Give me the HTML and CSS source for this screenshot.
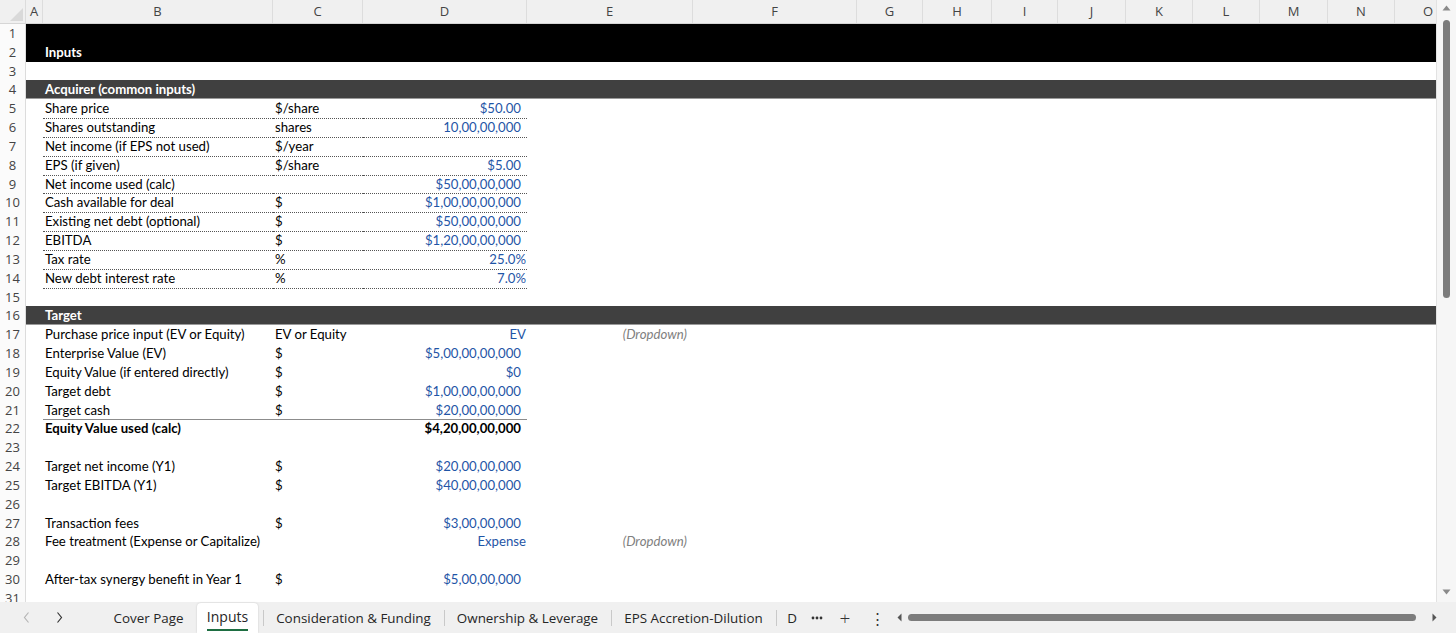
FILE: index.html
```html
<!DOCTYPE html>
<html lang="en">
<head>
<meta charset="utf-8">
<title>Inputs</title>
<link rel="stylesheet" href="styles.css">
</head>
<body>
<div class="app">
  <div class="sheet">
    <div class="grid">
      <div class="colhead">
        <div class="corner"><svg width="26" height="24" viewBox="0 0 26 24"><path d="M23 8 L23 21 L10 21 Z" fill="#d9d9d9"/></svg></div>
        <div class="letters">
          <div>A</div><div>B</div><div>C</div><div>D</div><div>E</div><div>F</div><div>G</div><div>H</div><div>I</div><div>J</div><div>K</div><div>L</div><div>M</div><div>N</div><div>O</div>
        </div>
      </div>

      <div class="row"><div class="rh">1</div><div class="cells black"></div></div>
      <div class="row"><div class="rh">2</div><div class="cells black"><div></div><div class="t bold">Inputs</div></div></div>
      <div class="row"><div class="rh">3</div><div class="cells"></div></div>
      <div class="row"><div class="rh">4</div><div class="cells dark"><div></div><div class="t bold">Acquirer (common inputs)</div></div></div>

      <div class="row"><div class="rh">5</div><div class="cells"><div></div><div class="t dot">Share price</div><div class="t dot">$/share</div><div class="t dot num blue">$50.00</div></div></div>
      <div class="row"><div class="rh">6</div><div class="cells"><div></div><div class="t dot">Shares outstanding</div><div class="t dot">shares</div><div class="t dot num blue">10,00,00,000</div></div></div>
      <div class="row"><div class="rh">7</div><div class="cells"><div></div><div class="t dot">Net income (if EPS not used)</div><div class="t dot">$/year</div><div class="t dot num blue"></div></div></div>
      <div class="row"><div class="rh">8</div><div class="cells"><div></div><div class="t dot">EPS (if given)</div><div class="t dot">$/share</div><div class="t dot num blue">$5.00</div></div></div>
      <div class="row"><div class="rh">9</div><div class="cells"><div></div><div class="t dot">Net income used (calc)</div><div class="t dot"></div><div class="t dot num blue">$50,00,00,000</div></div></div>
      <div class="row"><div class="rh">10</div><div class="cells"><div></div><div class="t dot">Cash available for deal</div><div class="t dot">$</div><div class="t dot num blue">$1,00,00,00,000</div></div></div>
      <div class="row"><div class="rh">11</div><div class="cells"><div></div><div class="t dot">Existing net debt (optional)</div><div class="t dot">$</div><div class="t dot num blue">$50,00,00,000</div></div></div>
      <div class="row"><div class="rh">12</div><div class="cells"><div></div><div class="t dot">EBITDA</div><div class="t dot">$</div><div class="t dot num blue">$1,20,00,00,000</div></div></div>
      <div class="row"><div class="rh">13</div><div class="cells"><div></div><div class="t dot">Tax rate</div><div class="t dot">%</div><div class="t dot pct blue">25.0%</div></div></div>
      <div class="row"><div class="rh">14</div><div class="cells"><div></div><div class="t dot">New debt interest rate</div><div class="t dot">%</div><div class="t dot pct blue">7.0%</div></div></div>
      <div class="row"><div class="rh">15</div><div class="cells"></div></div>

      <div class="row"><div class="rh">16</div><div class="cells dark"><div></div><div class="t bold">Target</div></div></div>
      <div class="row"><div class="rh">17</div><div class="cells"><div></div><div class="t">Purchase price input (EV or Equity)</div><div class="t">EV or Equity</div><div class="t pct blue">EV</div><div class="t note">(Dropdown)</div></div></div>
      <div class="row"><div class="rh">18</div><div class="cells"><div></div><div class="t">Enterprise Value (EV)</div><div class="t">$</div><div class="t num blue">$5,00,00,00,000</div></div></div>
      <div class="row"><div class="rh">19</div><div class="cells"><div></div><div class="t">Equity Value (if entered directly)</div><div class="t">$</div><div class="t num blue">$0</div></div></div>
      <div class="row"><div class="rh">20</div><div class="cells"><div></div><div class="t">Target debt</div><div class="t">$</div><div class="t num blue">$1,00,00,00,000</div></div></div>
      <div class="row"><div class="rh">21</div><div class="cells"><div></div><div class="t rule">Target cash</div><div class="t rule">$</div><div class="t rule num blue">$20,00,00,000</div></div></div>
      <div class="row"><div class="rh">22</div><div class="cells"><div></div><div class="t bold">Equity Value used (calc)</div><div class="t"></div><div class="t num bold">$4,20,00,00,000</div></div></div>
      <div class="row"><div class="rh">23</div><div class="cells"></div></div>
      <div class="row"><div class="rh">24</div><div class="cells"><div></div><div class="t">Target net income (Y1)</div><div class="t">$</div><div class="t num blue">$20,00,00,000</div></div></div>
      <div class="row"><div class="rh">25</div><div class="cells"><div></div><div class="t">Target EBITDA (Y1)</div><div class="t">$</div><div class="t num blue">$40,00,00,000</div></div></div>
      <div class="row"><div class="rh">26</div><div class="cells"></div></div>
      <div class="row"><div class="rh">27</div><div class="cells"><div></div><div class="t">Transaction fees</div><div class="t">$</div><div class="t num blue">$3,00,00,000</div></div></div>
      <div class="row"><div class="rh">28</div><div class="cells"><div></div><div class="t">Fee treatment (Expense or Capitalize)</div><div class="t"></div><div class="t pct blue">Expense</div><div class="t note">(Dropdown)</div></div></div>
      <div class="row"><div class="rh">29</div><div class="cells"></div></div>
      <div class="row"><div class="rh">30</div><div class="cells"><div></div><div class="t">After-tax synergy benefit in Year 1</div><div class="t">$</div><div class="t num blue">$5,00,00,000</div></div></div>
      <div class="row"><div class="rh">31</div><div class="cells"></div></div>
    </div>

    <div class="vscroll">
      <svg class="arr" width="19" height="12" viewBox="0 0 19 12"><path d="M5.5 8.5 L9.5 3.5 L13.5 8.5 Z" fill="#8a8a8a"/></svg>
      <div class="vtrack"><div class="vthumb"></div></div>
      <svg class="arr" width="19" height="12" viewBox="0 0 19 12"><path d="M5.5 3.5 L9.5 8.5 L13.5 3.5 Z" fill="#8a8a8a"/></svg>
    </div>
  </div>

  <div class="tabbar">
    <div class="nav">
      <svg width="34" height="31" viewBox="0 0 34 31"><path d="M24.5 10.5 L20.5 15.5 L24.5 20.5" fill="none" stroke="#b5b5b5" stroke-width="1.2"/></svg>
      <svg width="34" height="31" viewBox="0 0 34 31"><path d="M19.5 10.5 L23.5 15.5 L19.5 20.5" fill="none" stroke="#333" stroke-width="1.2"/></svg>
    </div>
    <div class="tab w-cover">Cover Page</div>
    <div class="tab active w-inputs"><span>Inputs</span></div>
    <div class="tab sep w-cons">Consideration &amp; Funding</div>
    <div class="tab sep w-own">Ownership &amp; Leverage</div>
    <div class="tab sep w-eps">EPS Accretion-Dilution</div>
    <div class="tab sep w-d">D</div>
    <div class="more"><svg width="12" height="4" viewBox="0 0 12 4"><circle cx="2" cy="2" r="1.4" fill="#333"/><circle cx="6" cy="2" r="1.4" fill="#333"/><circle cx="10" cy="2" r="1.4" fill="#333"/></svg></div>
    <div class="plus">+</div>
    <div class="kebab">⋮</div>
    <div class="hscroll">
      <svg width="12" height="31" viewBox="0 0 12 31"><path d="M7.5 11.5 L3.5 15.5 L7.5 19.5 Z" fill="#555"/></svg>
      <div class="hthumb"></div>
      <svg width="12" height="31" viewBox="0 0 12 31"><path d="M4.5 11.5 L8.5 15.5 L4.5 19.5 Z" fill="#555"/></svg>
    </div>
  </div>
</div>
</body>
</html>
```
FILE: styles.css
```css
* { box-sizing: border-box; }

html, body {
  margin: 0;
  padding: 0;
  background: #ffffff;
}

.app {
  width: 1456px;
  height: 633px;
  display: flex;
  flex-direction: column;
  overflow: hidden;
  font-family: "Lato", "Liberation Sans", sans-serif;
}

.sheet {
  height: 602px;
  display: flex;
  overflow: hidden;
}

.grid {
  width: 1437px;
  overflow: hidden;
  border-right: 1px solid #e2e2e2;
}

/* column letters */
.colhead {
  height: 24px;
  display: flex;
  background: #f0f0f0;
  border-bottom: 1px solid #d6d6d6;
}

.corner {
  width: 26px;
  flex: none;
  border-right: 1px solid #dcdcdc;
}

.corner svg { display: block; }

.letters {
  display: grid;
  grid-template-columns: 17px 230px 90px 164px 166px 164px 66px 69px 66px 68px 67px 67px 68px 67px 67px;
  overflow: hidden;
  flex: 1;
}

.letters div {
  text-align: center;
  font-family: "Open Sans", "Noto Sans", sans-serif;
  font-size: 13px;
  line-height: 23px;
  color: #444;
  border-right: 1px solid #dddddd;
}

/* sheet rows */
.row {
  height: 18.83px;
  display: flex;
}

.rh {
  width: 26px;
  flex: none;
  text-align: center;
  font-family: "Open Sans", "Noto Sans", sans-serif;
  font-size: 13px;
  line-height: 18.83px;
  color: #444;
  border-right: 1px solid #dcdcdc;
  background: #fbfbfb;
}

.cells {
  flex: 1;
  display: grid;
  grid-template-columns: 17px 230px 90px 164px 166px 1fr;
  font-size: 13.2px;
  line-height: 18.83px;
  color: #000;
}

.cells.black { background: #000; color: #fff; }
.cells.dark { background: #404040; color: #fff; border-bottom: 1px solid #9a9a9a; }

.t {
  padding-left: 2px;
  white-space: nowrap;
  overflow: visible;
}

.bold { font-weight: 700; }

.num { text-align: right; padding-right: 6px; }
.pct { text-align: right; padding-right: 1px; }

.blue { color: #1f55a6; }

.dot { border-bottom: 1px dotted #555; }
.rule { border-bottom: 1px solid #8c8c8c; }

.note {
  text-align: right;
  padding-right: 6px;
  font-style: italic;
  color: #808080;
}

/* vertical scrollbar */
.vscroll {
  width: 19px;
  flex: none;
  display: flex;
  flex-direction: column;
  align-items: center;
  background: #f6f6f6;
  padding: 2px 0 4px;
}

.vscroll .arr { display: block; flex: none; }

.vtrack {
  flex: 1;
  width: 19px;
  display: flex;
  justify-content: center;
  padding-top: 6px;
}

.vthumb {
  width: 7px;
  height: 278px;
  border-radius: 4px;
  background: #7c7c7c;
}

/* sheet tabs */
.tabbar {
  height: 31px;
  display: flex;
  align-items: stretch;
  background: #f0f0f0;
  font-family: "Open Sans", "Noto Sans", sans-serif;
  font-size: 13.4px;
  color: #262626;
}

.nav {
  width: 100px;
  flex: none;
  display: flex;
  padding-left: 4px;
}

.nav svg { display: block; }

.tab {
  flex: none;
  display: flex;
  align-items: center;
  justify-content: center;
  white-space: nowrap;
  position: relative;
}

.tab.sep::before {
  content: "";
  position: absolute;
  left: 0;
  top: 8px;
  height: 16px;
  border-left: 1px solid #c9c9c9;
}

.w-cover { width: 97px; }
.w-inputs { width: 61px; margin-right: 5px; }
.w-cons { width: 181px; }
.w-own { width: 167px; }
.w-eps { width: 165px; }
.w-d { width: 28px; padding-left: 4px; }

.tab.active {
  background: #ffffff;
  border-radius: 4px 4px 0 0;
  box-shadow: 0 0 2px rgba(0, 0, 0, 0.18);
  margin-top: 1px;
}

.tab.active span {
  font-size: 14px;
  padding-bottom: 4px;
  border-bottom: 2px solid #1e6e42;
  line-height: 17px;
  margin-top: 2px;
}

.more {
  width: 26px;
  flex: none;
  display: flex;
  align-items: center;
  justify-content: center;
}

.more svg { display: block; }

.plus {
  width: 30px;
  flex: none;
  display: flex;
  align-items: center;
  justify-content: center;
  font-size: 19px;
  font-weight: 300;
  color: #333;
}

.kebab {
  width: 34px;
  flex: none;
  display: flex;
  align-items: center;
  justify-content: center;
  font-size: 15px;
  color: #333;
}

.hscroll {
  flex: 1;
  display: flex;
  align-items: center;
  padding-right: 16px;
}

.hscroll svg { display: block; flex: none; }

.hthumb {
  flex: 1;
  height: 7px;
  margin: 0 12px 0 2px;
  border-radius: 4px;
  background: #7c7c7c;
}
```
